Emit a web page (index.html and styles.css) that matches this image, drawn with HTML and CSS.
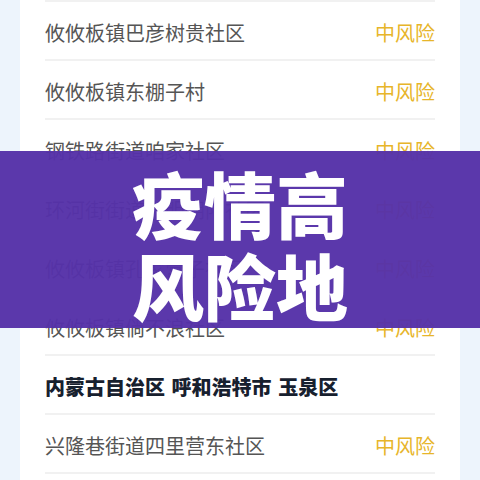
FILE: index.html
```html
<!DOCTYPE html>
<html lang="zh-CN">
<head>
    <meta charset="UTF-8">
    <meta name="viewport" content="width=device-width, initial-scale=1.0">
    <title>疫情高风险地</title>
    <link rel="stylesheet" href="styles.css">
</head>
<body>

    <div class="card">
        <ul class="list">
            <li class="row"><span class="place">攸攸板镇巴彦树贵社区</span><span class="level">中风险</span></li>
            <li class="row"><span class="place">攸攸板镇东棚子村</span><span class="level">中风险</span></li>
            <li class="row"><span class="place">钢铁路街道咱家社区</span><span class="level">中风险</span></li>
            <li class="row"><span class="place">环河街街道光明朝阳社区</span><span class="level">中风险</span></li>
            <li class="row"><span class="place">攸攸板镇孔家营子社区</span><span class="level">中风险</span></li>
            <li class="row"><span class="place">攸攸板镇倘不浪社区</span><span class="level">中风险</span></li>
            <li class="row area">内蒙古自治区 呼和浩特市 玉泉区</li>
            <li class="row"><span class="place">兴隆巷街道四里营东社区</span><span class="level">中风险</span></li>
        </ul>
    </div>

    <!-- title banner over the list -->
    <div class="banner">疫情高<br>风险地</div>

</body>
</html>
```

FILE: styles.css
```css
body {
    font-family: "Noto Sans CJK SC", "Noto Sans", sans-serif;
    background-color: #edf4fc;
    margin: 0;
    padding: 0;
    height: 480px;
    overflow: hidden;
    position: relative;
}

/* List card */
.card {
    margin: 0 20px;
    padding: 0 25px;
    background-color: #fff;
    height: 480px;
}
.list {
    list-style: none;
    margin: 0;
    padding: 0;
    border-top: 2px solid #f1f1f1;
}
.row {
    display: flex;
    justify-content: space-between;
    align-items: center;
    box-sizing: border-box;
    height: 59px;
    padding-top: 5px;
    border-bottom: 2px solid #f1f1f1;
    font-size: 20px;
    line-height: 28px;
}
.place {
    color: #555;
}
.level {
    color: #e7b52a;
}
.area {
    color: #17202e;
    font-weight: 900;
    word-spacing: 2px;
}

/* Purple title banner */
.banner {
    position: absolute;
    top: 151px;
    left: 0;
    right: 0;
    height: 177px;
    box-sizing: border-box;
    padding-top: 10px;
    background-color: rgba(86, 50, 168, 0.97);
    color: #fff;
    text-align: center;
    font-size: 72px;
    font-weight: 900;
    line-height: 82px;
}
```
